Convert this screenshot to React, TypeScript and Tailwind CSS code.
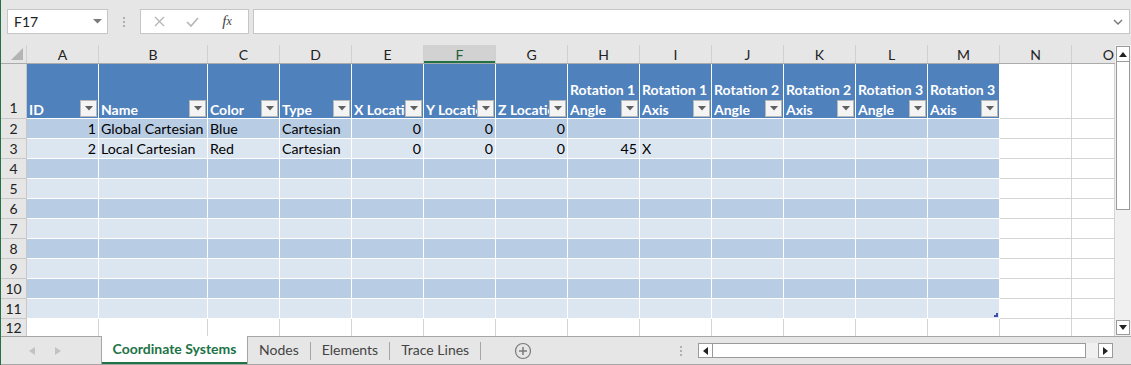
import React from "react";

const font = "font-[Lato,'Liberation_Sans',sans-serif]";

type Col = { key: string; w: string; table: boolean };

const cols: Col[] = [
  { key: "A", w: "w-[72px]", table: true },
  { key: "B", w: "w-[109px]", table: true },
  { key: "C", w: "w-[72px]", table: true },
  { key: "D", w: "w-[72px]", table: true },
  { key: "E", w: "w-[72px]", table: true },
  { key: "F", w: "w-[72px]", table: true },
  { key: "G", w: "w-[72px]", table: true },
  { key: "H", w: "w-[72px]", table: true },
  { key: "I", w: "w-[72px]", table: true },
  { key: "J", w: "w-[72px]", table: true },
  { key: "K", w: "w-[72px]", table: true },
  { key: "L", w: "w-[72px]", table: true },
  { key: "M", w: "w-[72px]", table: true },
  { key: "N", w: "w-[72px]", table: false },
  { key: "O", w: "w-[43px]", table: false },
];

const headers: string[][] = [
  ["ID"],
  ["Name"],
  ["Color"],
  ["Type"],
  ["X Location"],
  ["Y Location"],
  ["Z Location"],
  ["Rotation 1", "Angle"],
  ["Rotation 1", "Axis"],
  ["Rotation 2", "Angle"],
  ["Rotation 2", "Axis"],
  ["Rotation 3", "Angle"],
  ["Rotation 3", "Axis"],
];

// value, right-aligned?
const data: [string, boolean][][] = [
  [["1", true], ["Global Cartesian", false], ["Blue", false], ["Cartesian", false], ["0", true], ["0", true], ["0", true]],
  [["2", true], ["Local Cartesian", false], ["Red", false], ["Cartesian", false], ["0", true], ["0", true], ["0", true], ["45", true], ["X", false]],
];

function FilterButton() {
  return (
    <div className="absolute right-[1px] bottom-[1px] flex h-[17px] w-[17px] items-center justify-center border border-[#b8b8b8] bg-[#f4f4f4]">
      <svg width="8" height="5" viewBox="0 0 8 5">
        <path d="M0 0h8L4 4.5z" fill="#5f5f5f" />
      </svg>
    </div>
  );
}

function FormulaBar() {
  return (
    <div className="flex h-[45px] items-start gap-0 pl-[6px] pt-[9px]">
      <div className="flex h-[25px] w-[101px] items-center justify-between border border-[#c6c6c6] bg-white pl-[6px] pr-[5px] text-[14px] text-[#222]">
        <span>F17</span>
        <svg width="9" height="5" viewBox="0 0 9 5">
          <path d="M0 0h9L4.5 4.5z" fill="#7a7a7a" />
        </svg>
      </div>
      <div className="flex h-[25px] w-[32px] flex-col items-center justify-center gap-[2px]">
        <span className="h-[2px] w-[2px] bg-[#b0b0b0]" />
        <span className="h-[2px] w-[2px] bg-[#b0b0b0]" />
        <span className="h-[2px] w-[2px] bg-[#b0b0b0]" />
      </div>
      <div className="flex h-[25px] w-[109px] items-center border border-[#c6c6c6] bg-white">
        <div className="flex w-[36px] justify-center">
          <svg width="11" height="11" viewBox="0 0 11 11">
            <path d="M1 1l9 9M10 1l-9 9" stroke="#b5b5b5" strokeWidth="1.3" />
          </svg>
        </div>
        <div className="flex w-[30px] justify-center">
          <svg width="13" height="10" viewBox="0 0 13 10">
            <path d="M1 5l4 4 7-8" stroke="#b5b5b5" strokeWidth="1.6" fill="none" />
          </svg>
        </div>
        <div className="flex w-[40px] justify-center font-['Liberation_Serif',serif] text-[15px] italic text-[#444]">
          f<span className="text-[12px] leading-[22px]">x</span>
        </div>
      </div>
      <div className="ml-[4px] flex h-[25px] w-[877px] items-center justify-end border border-[#c6c6c6] bg-white pr-[6px]">
        <svg width="10" height="6" viewBox="0 0 10 6">
          <path d="M1 1l4 4 4-4" stroke="#777" strokeWidth="1.4" fill="none" />
        </svg>
      </div>
    </div>
  );
}

function ColumnHeaders() {
  return (
    <div className="flex h-[19px] border-b border-[#ababab]">
      <div className="relative w-[26px] border-r border-[#d0d0d0]">
        <svg className="absolute bottom-[3px] right-[3px]" width="12" height="12" viewBox="0 0 12 12">
          <path d="M12 0V12H0z" fill="#b4b4b4" />
        </svg>
      </div>
      {cols.map((c) => (
        <div
          key={c.key}
          className={`${c.w} flex items-center justify-center border-r text-[14px] ${
            c.key === "F"
              ? "border-[#d0d0d0] bg-[#d2d2d2] text-[#1e5f3c] shadow-[inset_0_-2px_0_#217346]"
              : "border-[#d0d0d0] text-[#222]"
          } ${c.key === "O" ? "justify-end border-r-0 pr-[1px]" : ""}`}
        >
          {c.key}
        </div>
      ))}
    </div>
  );
}

function RowNumber({ n, h, bottom }: { n: number; h: string; bottom?: boolean }) {
  return (
    <div
      className={`${h} flex w-[26px] justify-center border-r border-b border-[#c8c8c8] bg-[#e6e6e6] text-[14px] text-[#222] ${
        bottom ? "items-end" : "items-center"
      }`}
    >
      {n}
    </div>
  );
}

function HeaderRow() {
  return (
    <div className="flex">
      <RowNumber n={1} h="h-[55px]" bottom />
      {cols.map((c, i) =>
        c.table ? (
          <div
            key={c.key}
            className={`${c.w} relative flex h-[55px] flex-col justify-end overflow-hidden border-r border-b border-white bg-[#4f81bd] pl-[2px] text-[14px] leading-[20px] font-bold text-white`}
          >
            <div className="relative top-[2px]">
              {headers[i].map((line) => (
                <div key={line} className="overflow-hidden whitespace-nowrap">
                  {line}
                </div>
              ))}
            </div>
            <FilterButton />
          </div>
        ) : (
          <div key={c.key} className={`${c.w} h-[55px] border-r border-b border-[#d4d4d4] bg-white`} />
        )
      )}
    </div>
  );
}

function DataRow({ n, idx }: { n: number; idx: number }) {
  const dark = idx % 2 === 0;
  const row = data[idx] ?? [];
  return (
    <div className="flex">
      <RowNumber n={n} h="h-[20px]" />
      {cols.map((c, i) => {
        const cell = row[i];
        if (!c.table) {
          return <div key={c.key} className={`${c.w} h-[20px] border-r border-b border-[#d4d4d4] bg-white`} />;
        }
        return (
          <div
            key={c.key}
            className={`${c.w} relative flex h-[20px] items-center overflow-hidden whitespace-nowrap border-r border-b border-white px-[2px] text-[14.2px] text-black ${
              dark ? "bg-[#b8cce4]" : "bg-[#dce6f1]"
            } ${cell && cell[1] ? "justify-end" : "justify-start"}`}
          >
            {cell ? cell[0] : ""}
            {n === 11 && c.key === "M" ? (
              <span className="absolute right-[1px] bottom-[1px]">
                <svg width="4" height="4" viewBox="0 0 4 4">
                  <path d="M4 0V4H0V2H2V0z" fill="#3f4fb0" />
                </svg>
              </span>
            ) : null}
          </div>
        );
      })}
    </div>
  );
}

function LastRow() {
  return (
    <div className="flex">
      <div className="flex h-[17px] w-[26px] items-start justify-center overflow-hidden border-r border-[#c8c8c8] bg-[#e6e6e6] text-[14px] leading-[18px] text-[#222]">
        12
      </div>
      {cols.map((c) => (
        <div key={c.key} className={`${c.w} h-[17px] border-r border-[#d4d4d4] bg-white`} />
      ))}
    </div>
  );
}

function VScroll() {
  return (
    <div className="flex w-[16px] flex-col bg-[#f0f0f0] px-[1px] pt-[1px]">
      <div className="flex h-[16px] items-center justify-center border border-[#9a9a9a] bg-white">
        <svg width="8" height="5" viewBox="0 0 8 5">
          <path d="M0 5h8L4 0z" fill="#222" />
        </svg>
      </div>
      <div className="h-[148px] border border-t-0 border-[#9a9a9a] bg-white" />
      <div className="flex-1" />
      <div className="mb-[1px] flex h-[15px] items-center justify-center border border-[#9a9a9a] bg-white">
        <svg width="8" height="5" viewBox="0 0 8 5">
          <path d="M0 0h8L4 5z" fill="#222" />
        </svg>
      </div>
    </div>
  );
}

function TabBar() {
  const tabs = ["Nodes", "Elements", "Trace Lines"];
  return (
    <div className="flex h-[29px] items-stretch border-t border-b border-[#a6a6a6] bg-[#e6e6e6]">
      <div className="flex w-[100px] items-center gap-[20px] pl-[28px]">
        <svg width="6" height="8" viewBox="0 0 6 8">
          <path d="M6 0V8L0 4z" fill="#c2c2c2" />
        </svg>
        <svg width="6" height="8" viewBox="0 0 6 8">
          <path d="M0 0V8L6 4z" fill="#c2c2c2" />
        </svg>
      </div>
      <div className="-mt-[1px] flex w-[147px] items-center justify-center border-x border-[#a6a6a6] bg-white pb-[3px] text-[14px] font-bold text-[#217346] shadow-[inset_0_-2px_0_#217346]">
        Coordinate Systems
      </div>
      {tabs.map((t) => (
        <div key={t} className="flex items-center">
          <div className="px-[11px] pb-[3px] text-[14px] text-[#444]">{t}</div>
          <div className="h-[18px] w-px bg-[#a6a6a6]" />
        </div>
      ))}
      <div className="ml-[33px] flex items-center">
        <svg width="18" height="18" viewBox="0 0 18 18">
          <circle cx="9" cy="9" r="7.5" fill="none" stroke="#7a7a7a" strokeWidth="1.2" />
          <path d="M9 5v8M5 9h8" stroke="#7a7a7a" strokeWidth="1.5" />
        </svg>
      </div>
      <div className="ml-[148px] flex flex-col items-center justify-center gap-[2px]">
        <span className="h-[2px] w-[2px] bg-[#b0b0b0]" />
        <span className="h-[2px] w-[2px] bg-[#b0b0b0]" />
        <span className="h-[2px] w-[2px] bg-[#b0b0b0]" />
      </div>
      <div className="ml-[16px] flex items-center">
        <div className="flex h-[15px] w-[15px] items-center justify-center border border-[#9a9a9a] bg-white">
          <svg width="5" height="8" viewBox="0 0 5 8">
            <path d="M5 0V8L0 4z" fill="#222" />
          </svg>
        </div>
        <div className="h-[15px] w-[373px] border border-l-0 border-[#9a9a9a] bg-white" />
        <div className="h-[15px] w-[12px] bg-[#f0f0f0]" />
        <div className="flex h-[15px] w-[15px] items-center justify-center border border-[#9a9a9a] bg-white">
          <svg width="5" height="8" viewBox="0 0 5 8">
            <path d="M0 0V8L5 4z" fill="#222" />
          </svg>
        </div>
      </div>
    </div>
  );
}

export default function App() {
  const rows = [2, 3, 4, 5, 6, 7, 8, 9, 10, 11];
  return (
    <div className={`${font} flex h-[365px] w-[1131px] flex-col overflow-hidden border-l border-[#217346] bg-[#e6e6e6]`}>
      <FormulaBar />
      <div className="flex h-[291px]">
        <div className="flex w-[1114px] flex-col bg-white">
          <div className="bg-[#e6e6e6]">
            <ColumnHeaders />
          </div>
          <HeaderRow />
          {rows.map((n, i) => (
            <DataRow key={n} n={n} idx={i} />
          ))}
          <LastRow />
        </div>
        <VScroll />
      </div>
      <TabBar />
    </div>
  );
}
